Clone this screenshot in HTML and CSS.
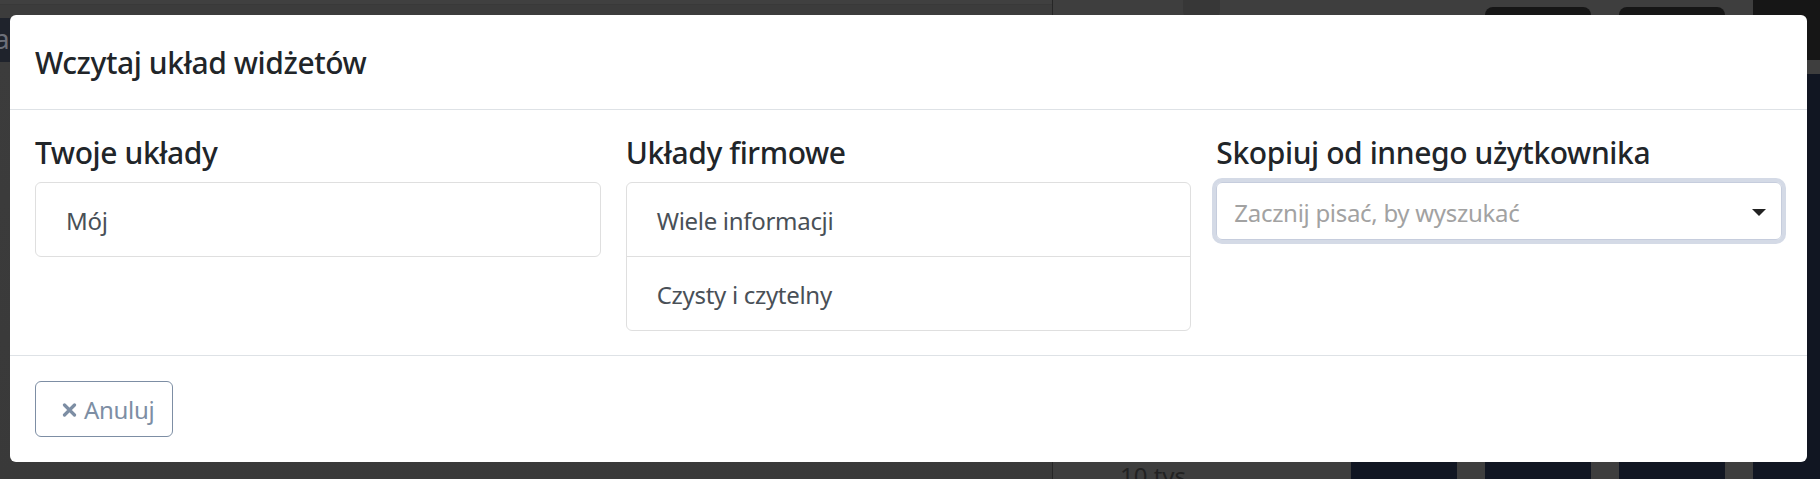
FILE: index.html
```html
<!DOCTYPE html>
<html lang="pl">
<head>
	<meta charset="utf-8">
	<meta name="viewport" content="width=device-width, initial-scale=1">
	<title>Wczytaj układ widżetów</title>
	<link rel="stylesheet" href="styles.css">
</head>
<body>
	<!-- the dimmed dashboard behind the dialog -->
	<div class="page">
		<div class="leftPane">
			<div class="leftTab"><span>a</span></div>
		</div>
		<div class="rightPane">
			<div class="knob"></div>
			<div class="axis"><span>10 tys.</span></div>
			<div class="barCol plain"><div class="bar"></div></div>
			<div class="barCol"><div class="btn"></div><div class="bar"></div></div>
			<div class="barCol"><div class="btn"></div><div class="bar"></div></div>
			<div class="barCol last"><div class="btn"></div><div class="bar"></div></div>
		</div>
	</div>

	<div class="modal">
		<div class="modalHeader">
			<h5 class="modalTitle">Wczytaj układ widżetów</h5>
		</div>
		<div class="modalBody">
			<div class="col">
				<h5 class="colTitle">Twoje układy</h5>
				<div class="listGroup">
					<a class="listItem">Mój</a>
				</div>
			</div>
			<div class="col">
				<h5 class="colTitle">Układy firmowe</h5>
				<div class="listGroup">
					<a class="listItem">Wiele informacji</a>
					<a class="listItem">Czysty i czytelny</a>
				</div>
			</div>
			<div class="col">
				<h5 class="colTitle">Skopiuj od innego użytkownika</h5>
				<div class="select">
					<span class="placeholder">Zacznij pisać, by wyszukać</span>
					<span class="caret"></span>
				</div>
			</div>
		</div>
		<div class="modalFooter">
			<button class="btnCancel">
				<span class="icon">
					<svg width="15" height="14" viewBox="0 0 15 14">
						<path d="M2.5 2 L12.5 12 M12.5 2 L2.5 12" stroke="currentColor" stroke-width="3.2" stroke-linecap="round"/>
					</svg>
				</span>Anuluj
			</button>
		</div>
	</div>
</body>
</html>
```

FILE: styles.css
```css
html, body {
	margin: 0;
	padding: 0;
}

body {
	width: 1820px;
	height: 479px;
	overflow: hidden;
	background-color: #3b3b3b;
	font-family: "Segoe UI", "Noto Sans", "Open Sans", sans-serif;
	color: #212529;
}

/* background page */
.page {
	display: flex;
	height: 479px;
}
.page > div, .rightPane > div {
	flex-shrink: 0;
}
.leftPane {
	width: 1052px;
	border-right: 1px solid #262626;
	background: linear-gradient(#404040 0, #404040 4px, #363636 4px, #3c3c3c 5px, #3c3c3c 60px, #393939 100%);
}
.leftTab {
	margin-top: 18px;
	width: 12px;
	height: 44px;
	background-color: #1f232c;
	color: #6d7079;
	font-size: 28px;
	line-height: 40px;
	overflow: hidden;
	text-indent: -6px;
}
.rightPane {
	flex: 1;
	display: flex;
	background-color: #3e3e3e;
}
.knob {
	width: 37px;
	height: 28px;
	margin: 0 0 0 130px;
	border-radius: 0 0 19px 19px;
	background-color: #373737;
	align-self: flex-start;
}
.axis {
	width: 126px;
	display: flex;
	align-items: flex-end;
	color: #222;
	font-size: 24px;
	line-height: 22px;
}
.axis span {
	margin-left: -100px;
	margin-bottom: -8px;
	white-space: nowrap;
}
.barCol {
	width: 106px;
	margin-right: 28px;
	display: flex;
	flex-direction: column;
}
.barCol.plain {
	margin-left: 5px;
	justify-content: flex-end;
}
.rightPane > .barCol.last {
	flex: 1;
	flex-shrink: 1;
	margin-right: 0;
}
.btn {
	margin-top: 7px;
	height: 60px;
	border-radius: 8px;
	background-color: #161616;
}
.last .btn {
	margin-top: 0;
	border-radius: 0;
}
.bar {
	margin-top: auto;
	height: 17px;
	background-color: #111622;
}
.last .bar {
	margin-top: 14px;
	flex: 1;
}

/* dialog */
.modal {
	position: fixed;
	top: 15px;
	left: 10px;
	width: 1797px;
	background-color: #fff;
	border-radius: 6px;
}
.modalHeader {
	padding: 25px 25px 24px;
	border-bottom: 1px solid #dee2e6;
}
.modalTitle {
	margin: 0;
	font-size: 30px;
	line-height: 45px;
	font-weight: 500;
	letter-spacing: -0.4px;
}
.modalBody {
	padding: 24px 25px;
	display: grid;
	grid-template-columns: 1fr 1fr 1fr;
	gap: 25px;
	align-items: start;
}
.colTitle {
	margin: 0 0 11px;
	padding-top: 1px;
	font-size: 30px;
	line-height: 36px;
	font-weight: 500;
	letter-spacing: -0.4px;
}
.listGroup {
	display: flex;
	flex-direction: column;
	border: 1px solid #dfdfdf;
	border-radius: 6px;
}
.listItem {
	padding: 20px 30px 17px;
	font-size: 24px;
	line-height: 36px;
	color: #495057;
	letter-spacing: -0.3px;
}
.listItem + .listItem {
	border-top: 1px solid #dfdfdf;
}
.select {
	height: 56px;
	display: flex;
	align-items: center;
	justify-content: space-between;
	padding: 0 15px 0 17px;
	border: 1px solid #c6cddd;
	border-radius: 6px;
	box-shadow: 0 0 0 4px #d4dae6;
}
.placeholder {
	font-size: 24px;
	color: #a2a2a2;
	letter-spacing: -0.3px;
	margin-top: 2px;
}
.caret {
	width: 0;
	height: 0;
	border-left: 7px solid transparent;
	border-right: 7px solid transparent;
	border-top: 7px solid #222;
	margin-top: 2px;
}
.modalFooter {
	padding: 25px;
	border-top: 1px solid #dee2e6;
	display: flex;
}
.btnCancel {
	display: flex;
	align-items: center;
	height: 56px;
	padding: 10px 18px 8px;
	border: 1px solid #7d8ea4;
	border-radius: 6px;
	background: #fff;
	color: #7d8ea4;
	font-family: inherit;
	font-size: 24px;
	line-height: 36px;
	letter-spacing: -0.3px;
}
.icon {
	width: 30px;
	display: flex;
	justify-content: center;
}
```
